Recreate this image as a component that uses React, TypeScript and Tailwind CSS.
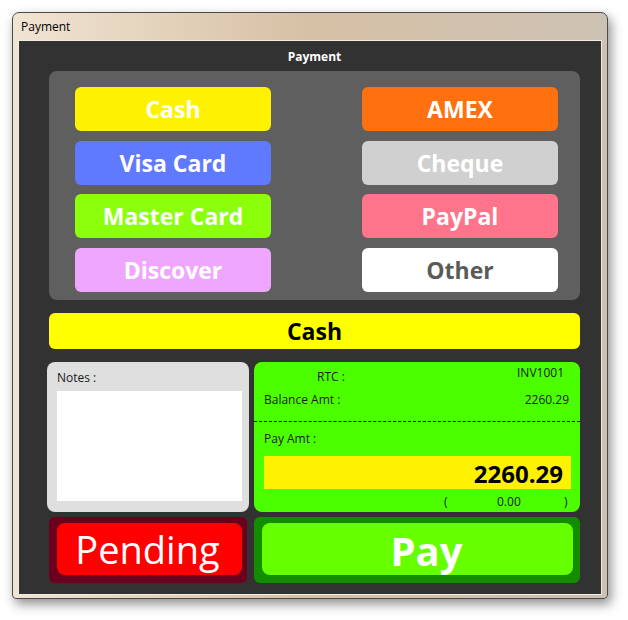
import React from "react";

type Method = { label: string; bg: string; text: string };

const LEFT: Method[] = [
  { label: "Cash", bg: "bg-[#fff200]", text: "text-white" },
  { label: "Visa Card", bg: "bg-[#5f7aff]", text: "text-white" },
  { label: "Master Card", bg: "bg-[#8cff0a]", text: "text-white" },
  { label: "Discover", bg: "bg-[#eea6ff]", text: "text-white" },
];

const RIGHT: Method[] = [
  { label: "AMEX", bg: "bg-[#ff700f]", text: "text-white" },
  { label: "Cheque", bg: "bg-[#d0d0d0]", text: "text-white" },
  { label: "PayPal", bg: "bg-[#ff738b]", text: "text-white" },
  { label: "Other", bg: "bg-white", text: "text-[#5a5a5a]" },
];

function MethodColumn({ items }: { items: Method[] }) {
  return (
    <div className="flex w-[196px] flex-col gap-[9.7px]">
      {items.map((m) => (
        <button
          key={m.label}
          className={`flex h-[44px] items-center justify-center rounded-[6px] pt-[1px] text-[23px] font-bold leading-none ${m.bg} ${m.text}`}
        >
          {m.label}
        </button>
      ))}
    </div>
  );
}

export default function App() {
  return (
    <div
      className="h-[620px] w-[628px] bg-white pl-[12px] pt-[12px]"
      style={{ fontFamily: '"Open Sans", "Noto Sans", sans-serif' }}
    >
      {/* Window frame */}
      <div className="flex h-[587px] w-[596px] flex-col rounded-t-[7px] rounded-b-[4px] border border-[#4a4a4a] bg-gradient-to-r from-[#f1e4d2] via-[#d6c0a5] to-[#cdc1b3] px-[5px] pb-[3px] shadow-[3px_5px_12px_rgba(0,0,0,0.45)]">
        <div className="flex h-[27px] items-center pl-[3px] text-[12px] text-black">
          Payment
        </div>

        {/* Client area */}
        <div className="flex-1 border border-[#f3ece2] bg-[#323232]">
          <div className="ml-[30px] flex w-[531px] flex-col">
            <div className="flex h-[30px] items-center justify-center pt-[2px] text-[12px] font-bold text-white">
              Payment
            </div>

            {/* Methods */}
            <div className="flex h-[229px] justify-between rounded-[8px] bg-[#5f5f5f] pl-[26px] pr-[22px] pt-[16px]">
              <MethodColumn items={LEFT} />
              <MethodColumn items={RIGHT} />
            </div>

            <div className="mt-[13px] flex h-[36px] items-center justify-center rounded-[6px] bg-[#ffff00] pt-[1px] text-[23px] font-bold text-black">
              Cash
            </div>

            {/* Notes + amounts */}
            <div className="-ml-[2px] mt-[13px] flex h-[150px] gap-[5px]">
              <div className="flex w-[202px] flex-col rounded-[8px] bg-[#dfdfdf] pl-[10px] pt-[8px]">
                <div className="h-[16px] text-[12px] leading-[16px] text-[#1a1a1a]">Notes :</div>
                <div className="mt-[5px] h-[110px] w-[185px] bg-white" />
              </div>

              <div className="flex w-[326px] flex-col rounded-[8px] bg-[#4cff00] text-[12px] leading-[16px] text-[#1a1a1a]">
                <div className="flex h-[30px]">
                  <span className="pl-[63px] pt-[7px]">RTC :</span>
                  <span className="ml-auto pr-[16px] pt-[3px]">INV1001</span>
                </div>
                <div className="flex h-[30px] border-b border-dashed border-black px-[10px]">
                  <span>Balance Amt :</span>
                  <span className="ml-auto pr-[1px]">2260.29</span>
                </div>
                <div className="pl-[10px] pt-[9px]">Pay Amt :</div>
                <div className="ml-[10px] mt-[9px] flex h-[33px] w-[307px] items-center justify-end bg-[#fff200] pr-[8px] pt-[2px] text-[24px] font-bold leading-none text-black">
                  2260.29
                </div>
                <div className="mt-[5px] flex pl-[190px]">
                  <span className="w-[53px]">(</span>
                  <span className="w-[67px]">0.00</span>
                  <span>)</span>
                </div>
              </div>
            </div>

            {/* Actions */}
            <div className="mt-[5px] flex h-[66px] gap-[7px]">
              <div className="flex w-[198px] rounded-[6px] bg-[#6b001e] pb-[8px] pl-[8px] pr-[5px] pt-[6px]">
                <button className="flex flex-1 items-center justify-center rounded-[8px] bg-[#ff0000] pr-[4px] text-[38px] leading-none text-white">
                  Pending
                </button>
              </div>
              <div className="flex w-[326px] rounded-[6px] bg-[#138c00] pb-[8px] pl-[8px] pr-[7px] pt-[6px]">
                <button className="flex flex-1 items-center justify-center rounded-[8px] bg-[#66ff00] pl-[18px] pt-[3px] text-[40px] font-bold leading-none text-white">
                  Pay
                </button>
              </div>
            </div>
          </div>
        </div>
      </div>
    </div>
  );
}
